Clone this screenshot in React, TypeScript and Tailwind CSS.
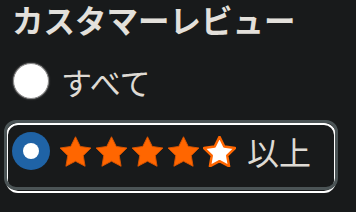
import React from "react";

const STAR = "M12 2l3.09 6.26L22 9.27l-5 4.87 1.18 6.88L12 17.77l-6.18 3.25L7 14.14 2 9.27l6.91-1.01L12 2z";

function Star({ filled }: { filled: boolean }) {
  return (
    <svg width="33" height="31" viewBox="1.5 1.5 21 20" className="shrink-0">
      <path
        d={STAR}
        fill={filled ? "#ff6600" : "#ffffff"}
        stroke={filled ? "#d85400" : "#ff6600"}
        strokeWidth={filled ? 0.6 : 1.6}
        strokeLinejoin="round"
      />
    </svg>
  );
}

export default function App() {
  return (
    <div
      className="w-[356px] h-[212px] overflow-hidden bg-[#181a1b] text-[#dedad4]"
      style={{ fontFamily: '"Noto Sans CJK JP", "Noto Sans", sans-serif' }}
    >
      <h2 className="pl-3 text-[31.5px] leading-[38px] font-bold text-[#e3e0db]">カスタマーレビュー</h2>

      <label className="mt-[25px] flex items-center pl-[13px] h-[36px]">
        <span className="w-[36px] h-[36px] rounded-full bg-white border-[1.5px] border-[#8a8a8a] shadow-[0_0_2px_#777]" />
        <span className="ml-[12px] text-[31px] leading-none">すべて</span>
      </label>

      <div className="relative mt-[21px] ml-1 w-[334px] h-[70px]">
        <div className="absolute left-[2px] right-[2px] top-[3px] -bottom-[3px] rounded-[12px] border-2 border-white" />
        <div className="relative h-full rounded-[12px] border-[3px] border-[#4b5456] flex items-center pl-[5px] pb-[8px]">
          <span className="w-[38px] h-[38px] rounded-full bg-[#1f63a6] flex items-center justify-center">
            <span className="w-[16px] h-[16px] rounded-full bg-white" />
          </span>
          <span className="ml-[9px] flex items-center gap-[3px]">
            <Star filled />
            <Star filled />
            <Star filled />
            <Star filled />
            <Star filled={false} />
          </span>
          <span className="ml-[11px] text-[32px] leading-none">以上</span>
        </div>
      </div>
    </div>
  );
}
